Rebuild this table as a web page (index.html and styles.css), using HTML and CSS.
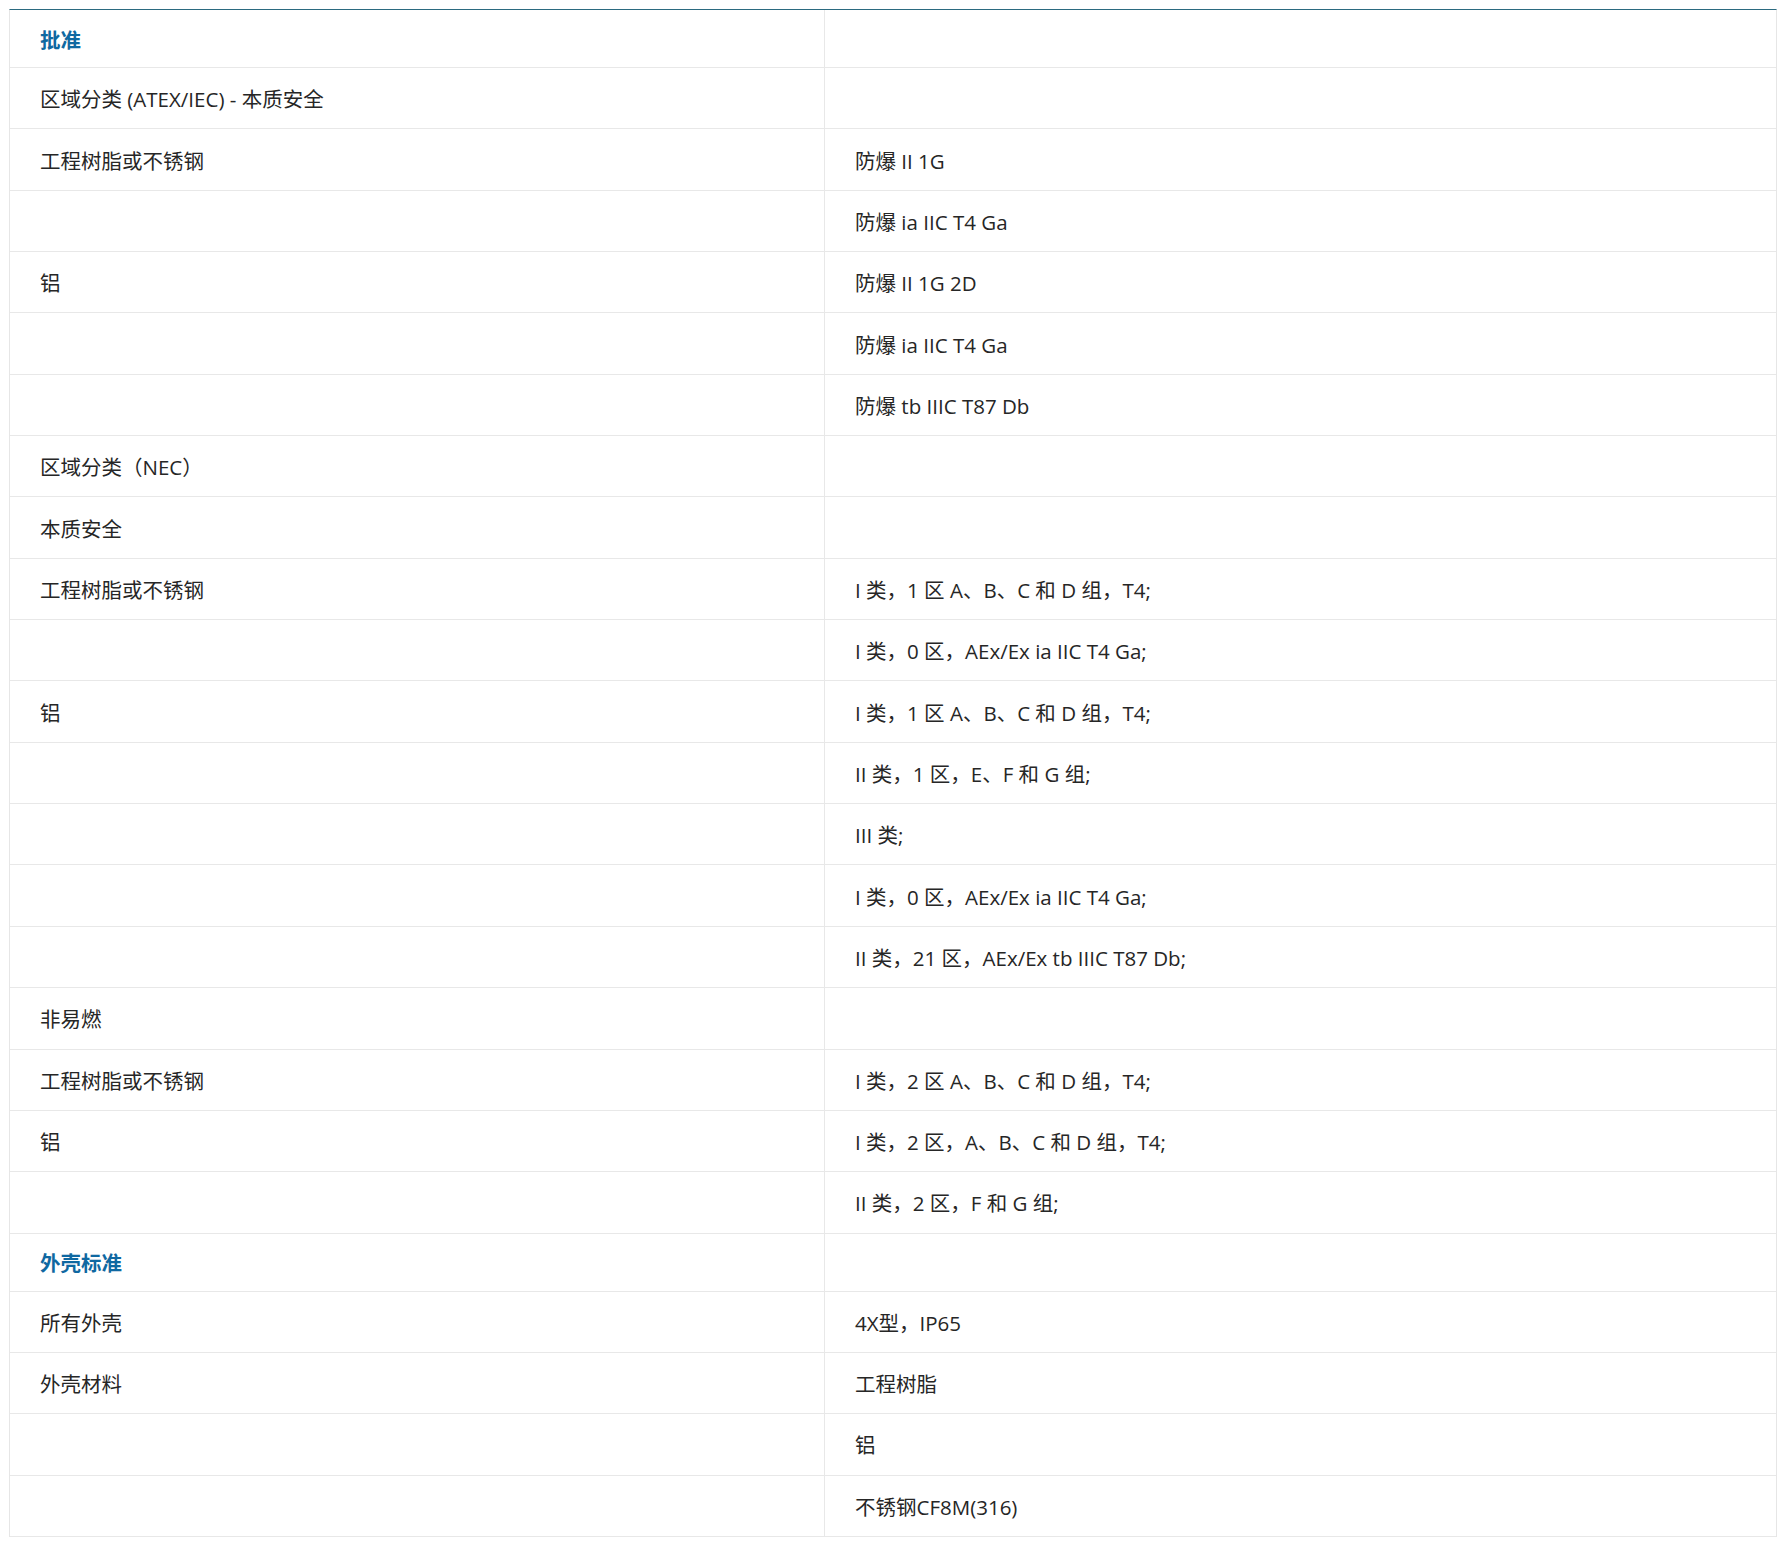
FILE: index.html
```html
<!DOCTYPE html>
<html lang="zh-CN">
<head>
<meta charset="utf-8">
<title>规格</title>
<link rel="stylesheet" href="styles.css">
</head>
<body>
<div class="spec">
  <div class="row head"><div class="c1">批准</div><div class="c2"></div></div>
  <div class="row"><div class="c1">区域分类 (ATEX/IEC) - 本质安全</div><div class="c2"></div></div>
  <div class="row"><div class="c1">工程树脂或不锈钢</div><div class="c2">防爆 II 1G</div></div>
  <div class="row"><div class="c1"></div><div class="c2">防爆 ia IIC T4 Ga</div></div>
  <div class="row"><div class="c1">铝</div><div class="c2">防爆 II 1G 2D</div></div>
  <div class="row"><div class="c1"></div><div class="c2">防爆 ia IIC T4 Ga</div></div>
  <div class="row"><div class="c1"></div><div class="c2">防爆 tb IIIC T87 Db</div></div>
  <div class="row"><div class="c1">区域分类（NEC）</div><div class="c2"></div></div>
  <div class="row"><div class="c1">本质安全</div><div class="c2"></div></div>
  <div class="row"><div class="c1">工程树脂或不锈钢</div><div class="c2">I 类，1 区 A、B、C 和 D 组，T4;</div></div>
  <div class="row"><div class="c1"></div><div class="c2">I 类，0 区，AEx/Ex ia IIC T4 Ga;</div></div>
  <div class="row"><div class="c1">铝</div><div class="c2">I 类，1 区 A、B、C 和 D 组，T4;</div></div>
  <div class="row"><div class="c1"></div><div class="c2">II 类，1 区，E、F 和 G 组;</div></div>
  <div class="row"><div class="c1"></div><div class="c2">III 类;</div></div>
  <div class="row"><div class="c1"></div><div class="c2">I 类，0 区，AEx/Ex ia IIC T4 Ga;</div></div>
  <div class="row"><div class="c1"></div><div class="c2">II 类，21 区，AEx/Ex tb IIIC T87 Db;</div></div>
  <div class="row"><div class="c1">非易燃</div><div class="c2"></div></div>
  <div class="row"><div class="c1">工程树脂或不锈钢</div><div class="c2">I 类，2 区 A、B、C 和 D 组，T4;</div></div>
  <div class="row"><div class="c1">铝</div><div class="c2">I 类，2 区，A、B、C 和 D 组，T4;</div></div>
  <div class="row"><div class="c1"></div><div class="c2">II 类，2 区，F 和 G 组;</div></div>
  <div class="row head"><div class="c1">外壳标准</div><div class="c2"></div></div>
  <div class="row"><div class="c1">所有外壳</div><div class="c2">4X型，IP65</div></div>
  <div class="row"><div class="c1">外壳材料</div><div class="c2">工程树脂</div></div>
  <div class="row"><div class="c1"></div><div class="c2">铝</div></div>
  <div class="row"><div class="c1"></div><div class="c2">不锈钢CF8M(316)</div></div>
</div>
</body>
</html>
```
FILE: styles.css
```css
html, body {
  margin: 0;
  padding: 0;
  background: #ffffff;
}
body {
  padding: 9px 0 0 9px;
  font-family: "Open Sans", "Noto Sans CJK SC", sans-serif;
  font-size: 20.5px;
  color: #262626;
}
.spec {
  width: 1768px;
  border-top: 1px solid #2b6a80;
  border-left: 1px solid #e6e6e6;
  border-right: 1px solid #e6e6e6;
  box-sizing: border-box;
}
.row {
  display: flex;
  height: 61.35px;
  border-bottom: 1px solid #e8e8e8;
  box-sizing: border-box;
}
.row.head {
  height: 58px;
}
.row.head .c1 {
  color: #0f68a1;
  font-weight: bold;
}
.c1, .c2 {
  display: flex;
  align-items: center;
  padding-left: 30px;
  box-sizing: border-box;
  white-space: nowrap;
}
.c1 {
  width: 815px;
  border-right: 1px solid #e8e8e8;
}
.c2 {
  flex: 1;
}
```
